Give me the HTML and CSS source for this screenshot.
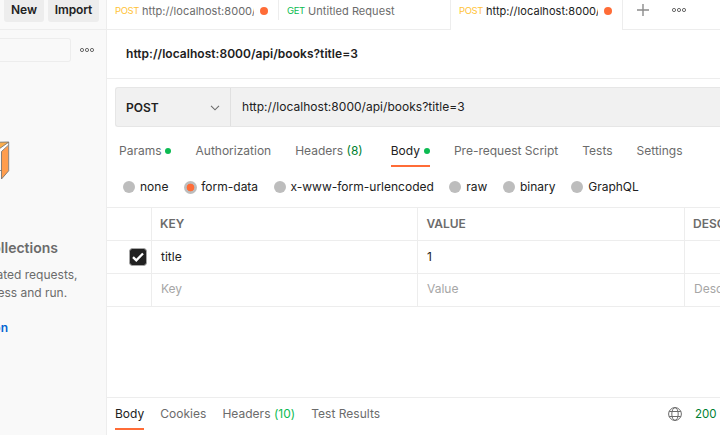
FILE: index.html
```html
<!DOCTYPE html>
<html lang="en">
<head>
<meta charset="utf-8">
<title>API client</title>
<link rel="stylesheet" href="styles.css">
</head>
<body>
<div class="app">
  <aside class="sidebar">
    <div class="side-head"><button class="btn new">New</button><button class="btn import">Import</button></div>
    <div class="side-search">
      <div class="search-box"></div>
      <svg class="dots" width="16" height="6" viewBox="0 0 16 6"><circle cx="3" cy="3" r="1.6"/><circle cx="8" cy="3" r="1.6"/><circle cx="13" cy="3" r="1.6"/></svg>
    </div>
    <svg class="cube" width="12" height="42" viewBox="0 0 12 42">
      <path d="M0 2.2 8.5 2 8.5 2.6 0 8.5Z" fill="#f9ad4e"/>
      <path d="M0 8.5 8.5 2.5 8.5 5.5 1.5 11.5 0 12.5Z" fill="#fff"/>
      <path d="M1.5 11.5 8.5 5.5 8.5 31 1.5 39Z" fill="#ff9d4d"/>
      <path d="M0 2.2 8.7 2V30.8L1.5 39V11.5L8.5 5M0 8.3 8.5 2.3M0 30.5H1.5" fill="none" stroke="#6b6b6b" stroke-width=".8"/>
    </svg>
    <div class="empty">
      <h2>You don’t have any collections</h2>
      <p>Collections let you group related requests,<br>making them easier to access and run.</p>
      <a>Create Collection</a>
    </div>
  </aside>
  <main class="main">
    <div class="tabbar">
      <div class="tab first"><span class="post">POST</span><span class="name clip">http://localhost:8000/api</span><i class="unsaved"></i></div>
      <div class="tab second"><span class="get">GET</span><span class="name">Untitled Request</span></div>
      <div class="tab active"><span class="post">POST</span><span class="name clip">http://localhost:8000/api</span><i class="unsaved"></i></div>
      <div class="tab-actions">
        <svg width="12" height="12" viewBox="0 0 12 12"><path d="M6 0V12M0 6H12" stroke="#8c8c8c" stroke-width="1.4"/></svg>
        <svg class="dots" width="16" height="6" viewBox="0 0 16 6"><circle cx="3" cy="3" r="1.6"/><circle cx="8" cy="3" r="1.6"/><circle cx="13" cy="3" r="1.6"/></svg>
      </div>
    </div>
    <h1 class="title">http://localhost:8000/api/books?title=3</h1>
    <div class="urlbar">
      <div class="method">POST<svg width="10" height="6" viewBox="0 0 10 6"><path d="M1 .8 5 4.8 9 .8" fill="none" stroke="#6b6b6b" stroke-width="1.1"/></svg></div>
      <div class="url">http://localhost:8000/api/books?title=3</div>
    </div>
    <nav class="req-tabs">
      <span class="params">Params<i class="dot"></i></span><span>Authorization</span><span class="headers">Headers <b class="dark">(8)</b></span><span class="on">Body<i class="dot"></i></span><span>Pre-request Script</span><span>Tests</span><span>Settings</span>
    </nav>
    <div class="radios">
      <label><i></i>none</label><label><i class="checked"></i>form-data</label><label><i></i>x-www-form-urlencoded</label><label><i></i>raw</label><label><i></i>binary</label><label><i></i>GraphQL</label>
    </div>
    <div class="grid">
      <div class="row head"><div></div><div>KEY</div><div>VALUE</div><div>DESCRIPTION</div></div>
      <div class="row"><div class="check"><svg width="18" height="18" viewBox="0 0 18 18"><rect x=".5" y=".5" width="17" height="17" rx="3" fill="#212121" stroke="#a6a6a6"/><path d="M4 9.2 7.3 12.4 14 5.5" fill="none" stroke="#fff" stroke-width="2.3"/></svg></div><div>title</div><div>1</div><div></div></div>
      <div class="row hint"><div></div><div>Key</div><div>Value</div><div>Description</div></div>
    </div>
    <div class="response">
      <nav class="res-tabs"><span class="on">Body</span><span>Cookies</span><span>Headers <b>(10)</b></span><span>Test Results</span></nav>
      <div class="status">
        <svg width="14" height="14" viewBox="0 0 14 14" fill="none" stroke="#6b6b6b"><circle cx="7" cy="7" r="6.4"/><ellipse cx="7" cy="7" rx="3.2" ry="6.4"/><path d="M1.2 4.5H12.8M1.2 9.5H12.8"/></svg>
        <span>200 OK</span>
      </div>
    </div>
  </main>
</div>
</body>
</html>
```
FILE: styles.css
```css
* { box-sizing: border-box; }
body { margin: 0; font: 12px/18px Inter, "Liberation Sans", sans-serif; color: #212121; background: #fff; }
.app { display: flex; width: 720px; height: 435px; overflow: hidden; }
i { font-style: normal; display: inline-block; flex: none; }
svg { flex: none; display: block; }
.dots { fill: none; stroke: #6b6b6b; stroke-width: 1; }

.sidebar { width: 107px; flex: none; background: #f9f9f9; border-right: 1px solid #ededed; overflow: hidden; }
.side-head { display: flex; gap: 4px; height: 30px; padding-left: 4px; border-bottom: 1px solid #ededed; }
.btn { height: 22px; padding: 0 0 2px; border: 0; border-radius: 0 0 3px 3px; background: #ededed; color: #212121; font: 600 12px/18px Inter, sans-serif; }
.new { width: 40px; }
.import { width: 51px; letter-spacing: -.1px; }
.side-search { display: flex; gap: 8px; padding-top: 8px; }
.side-search .dots { margin-top: 9px; }
.search-box { width: 71px; height: 24px; border: 1px solid #ededed; border-left: 0; border-radius: 0 3px 3px 0; }
.cube { margin-top: 78px; }
.empty { display: flex; flex-direction: column; align-items: flex-end; color: #6b6b6b; white-space: nowrap; margin-top: 56px; }
.empty h2 { margin: 0 48px 8px 0; font-size: 14px; line-height: 20px; font-weight: 600; }
.empty p { margin: 0 28.5px 17px 0; text-align: center; }
.empty a { margin-right: 98px; color: #0265d2; font-weight: 600; }

.main { flex: 1; min-width: 0; overflow: hidden; display: flex; flex-direction: column; }
.tabbar { display: flex; height: 30px; }
.tab { display: flex; border-bottom: 1px solid #ededed; padding: 2px 0 0 8px; }
.tab .post, .tab .get { font-size: 9.5px; letter-spacing: -.4px; margin-right: 4px; width: 23px; color: #ffb400; opacity: .8; }
.tab .get { width: 17px; color: #0cbb52; opacity: 1; }
.name { font-size: 11px; letter-spacing: .05px; color: #6b6b6b; white-space: nowrap; }
.clip { width: 112px; overflow: hidden; }
.unsaved { width: 8px; height: 8px; border-radius: 50%; background: #ff6c37; margin: 5px 0 0 6px; }
.first { width: 171px; }
.second { width: 172px; background: linear-gradient(#ededed, #ededed) 0 0 / 1px 20px no-repeat; padding-left: 9px; }
.active { width: 173px; border: solid #ededed; border-width: 0 1px; }
.active .name { color: #212121; }
.tab-actions { flex: 1; display: flex; gap: 22px; padding: 4px 0 0 14px; border-bottom: 1px solid #ededed; }
.tab-actions .dots { margin-top: 3px; }
.title { margin: 0; height: 49px; padding: 15px 19px; border-bottom: 1px solid #ededed; font-size: 12px; line-height: 18px; font-weight: 600; letter-spacing: .04px; }

.urlbar { display: flex; flex: none; height: 40px; margin: 8px 0 0 8px; border: 1px solid #e6e6e6; border-right: 0; border-radius: 3px 0 0 3px; background: #f1f1f1; line-height: 38px; }
.method { display: flex; align-items: center; justify-content: space-between; width: 115px; padding: 2px 10px 0; border-right: 1px solid #e0e0e0; font-weight: 600; }
.url { padding-left: 11px; letter-spacing: .03px; }

.req-tabs, .res-tabs { display: flex; color: #6b6b6b; white-space: nowrap; }
.req-tabs { gap: 24px; height: 40px; padding: 15px 0 0 12px; }
.req-tabs span, .res-tabs span { height: 25px; }
.req-tabs .on, .res-tabs .on { color: #212121; border-bottom: 2px solid #ff6c37; }
.req-tabs .headers { margin-right: 4px; }
.dot { width: 6px; height: 6px; margin: 0 0 1px 4px; border-radius: 50%; background: #0cbb52; }
.params .dot { margin: 0 1px 1px 3px; }
.req-tabs b, .res-tabs b { font-weight: 400; color: #0cbb52; }
.req-tabs .dark { color: #007f31; }
.radios { display: flex; gap: 15.4px; height: 40px; padding: 11px 0 0 16px; white-space: nowrap; }
.radios label { display: flex; }
.radios i { width: 12px; height: 12px; margin: 3px 5px 0 0; border-radius: 50%; background: #bdbdbd; }
.radios .checked { width: 13px; height: 13px; margin-right: 4.5px; background: radial-gradient(circle, #ff6c37 3.5px, #bdbdbd 4.2px); }
.radios label:nth-child(n+5) { margin-left: .3px; }

.grid { border-top: 1px solid #ededed; }
.row { display: grid; grid-template-columns: 44px 266px 267px 1fr; height: 33px; border-bottom: 1px solid #ededed; line-height: 32px; }
.row > div { padding-left: 9px; border-left: 1px solid #ededed; overflow: hidden; }
.row > div:first-child { border-left: 0; }
.row > div:nth-child(n+3) { padding-left: 9px; }
.head { font-weight: 600; color: #6b6b6b; }
.head > div:nth-child(2) { padding-left: 8px; }
.head > div:nth-child(n+3) { padding-left: 8.4px; }
.head > div:nth-child(4) { padding-left: 8px; }
.hint { color: #a6a6a6; line-height: 30px; }
.row > .check { padding: 7px 0 0 22px; }

.response { display: flex; justify-content: space-between; margin-top: auto; height: 38px; border-top: 1px solid #ededed; padding: 7px 0 0 8px; }
.res-tabs { gap: 16px; letter-spacing: .02px; }
.status { display: flex; gap: 13px; width: 52px; white-space: nowrap; color: #007f31; font-size: 11.5px; }
.status svg { margin-top: 2px; }
```
